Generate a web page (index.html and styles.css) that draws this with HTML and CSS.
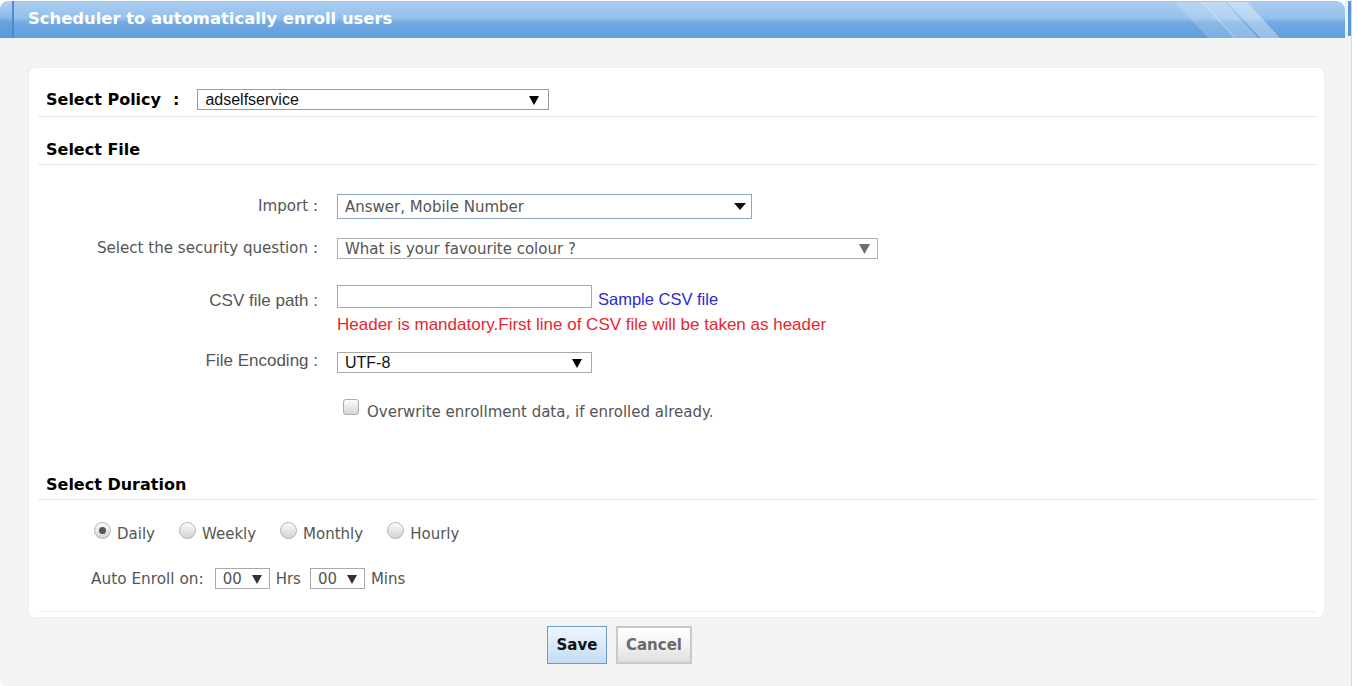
FILE: index.html
```html
<!DOCTYPE html>
<html>
<head>
<meta charset="utf-8">
<link rel="stylesheet" href="styles.css">
</head>
<body>
<div class="page">
  <div class="titlebar">
    <div class="tb-cap"></div>
    <div class="tb-main">
      <h1 class="tb-title">Scheduler to automatically enroll users</h1>
      <svg class="tb-stripes" width="110" height="37" viewBox="0 0 110 37">
        <polygon points="0,0 28,0 62,37 34,37" fill="#ffffff" fill-opacity="0.18"/>
        <polygon points="26,0 50,0 84,37 60,37" fill="#ffffff" fill-opacity="0.28"/>
        <polygon points="52,0 72,0 106,37 86,37" fill="#ffffff" fill-opacity="0.35"/>
      </svg>
    </div>
    <div class="tb-gap"></div>
    <div class="tb-end"></div>
  </div>

  <div class="content">
    <div class="card">
      <div class="policy-row">
        <span class="heading">Select Policy</span><span class="heading colon">:</span>
        <div class="sel sel-policy"><span>adselfservice</span>
          <svg width="10" height="10" viewBox="0 0 10 10"><path d="M0 1H10L5 10Z" fill="#000"/></svg>
        </div>
      </div>

      <div class="section-title">Select File</div>

      <div class="form">
        <div class="frow r-import">
          <div class="flabel lh25">Import :</div>
          <div class="sel sel-import"><span>Answer, Mobile Number</span>
            <svg width="12" height="7" viewBox="0 0 12 7"><path d="M0 0H12L6 7Z" fill="#111"/></svg>
          </div>
        </div>
        <div class="frow r-question">
          <div class="flabel lh21">Select the security question :</div>
          <div class="sel sel-question"><span>What is your favourite colour ?</span>
            <svg width="11" height="10" viewBox="0 0 11 10"><path d="M0 0H11L5.5 10Z" fill="#6d6d6d"/></svg>
          </div>
        </div>
        <div class="frow r-csv">
          <div class="flabel arial csv-label">CSV file path :</div>
          <div class="fcol">
            <div class="csv-line">
              <div class="textbox"></div>
              <span class="link">Sample CSV file</span>
            </div>
            <div class="err">Header is mandatory.First line of CSV file will be taken as header</div>
          </div>
        </div>
        <div class="frow r-enc">
          <div class="flabel arial enc-label">File Encoding :</div>
          <div class="sel sel-enc"><span>UTF-8</span>
            <svg width="10" height="10" viewBox="0 0 10 10"><path d="M0 1H10L5 10Z" fill="#000"/></svg>
          </div>
        </div>
        <div class="frow r-check">
          <div class="flabel"></div>
          <div class="checkline">
            <span class="checkbox"></span>
            <span class="check-text">Overwrite enrollment data, if enrolled already.</span>
          </div>
        </div>
      </div>

      <div class="section-title duration-title">Select Duration</div>

      <div class="duration">
        <div class="radios">
          <span class="radio on"></span><span class="rlabel">Daily</span>
          <span class="radio"></span><span class="rlabel">Weekly</span>
          <span class="radio"></span><span class="rlabel">Monthly</span>
          <span class="radio"></span><span class="rlabel">Hourly</span>
        </div>
        <div class="enroll">
          <span class="elabel">Auto Enroll on:</span>
          <div class="sel sel-time"><span>00</span>
            <svg width="10" height="10" viewBox="0 0 10 10"><path d="M0 1H10L5 10Z" fill="#333"/></svg>
          </div>
          <span class="unit">Hrs</span>
          <div class="sel sel-time"><span>00</span>
            <svg width="10" height="10" viewBox="0 0 10 10"><path d="M0 1H10L5 10Z" fill="#333"/></svg>
          </div>
          <span class="unit">Mins</span>
        </div>
      </div>
    </div>

    <div class="buttons">
      <button class="btn btn-save">Save</button>
      <button class="btn btn-cancel">Cancel</button>
    </div>
  </div>
</div>
</body>
</html>
```

FILE: styles.css
```css
html, body {
  margin: 0;
  padding: 0;
  background: #ffffff;
}
body {
  font-family: "DejaVu Sans", Verdana, sans-serif;
  font-size: 15px;
  color: #555555;
}
.page {
  width: 1352px;
  height: 686px;
  box-sizing: border-box;
  background: #f3f3f3;
  border-right: 1px solid #dadada;
  border-bottom-left-radius: 6px;
  overflow: hidden;
}

/* title bar */
.titlebar {
  display: flex;
  height: 37px;
  padding-top: 1px;
  background: #ffffff;
}
.tb-cap {
  width: 12px;
  border-top-left-radius: 8px;
  background: linear-gradient(to bottom, #b4d3f2 0%, #8ab8e8 45%, #6aa2de 55%, #5b98d8 100%);
  border-right: 2px solid #4c8bd0;
}
.tb-main {
  flex: 1;
  position: relative;
  display: flex;
  align-items: center;
  padding-left: 14px;
  border-top-right-radius: 9px;
  border-top: 1px solid #9cc4ee;
  background: linear-gradient(to bottom, #a9cdf1 0%, #94c0ec 45%, #73aae3 56%, #5e9ddc 100%);
}
.tb-title {
  margin: 0 0 3px 0;
  font-family: "DejaVu Sans", Verdana, sans-serif;
  font-weight: bold;
  font-size: 16.4px;
  color: #ffffff;
}
.tb-stripes {
  position: absolute;
  right: 60px;
  top: 0;
}
.tb-gap {
  width: 3px;
  background: #e8f0f8;
}
.tb-end {
  width: 3px;
  margin: 0 0 2px 0;
  background: #5a96d6;
}

/* content */
.content {
  padding: 30px 0 0 29px;
}
.card {
  width: 1295px;
  box-sizing: border-box;
  background: #ffffff;
  border-radius: 6px;
  box-shadow: 0 0 2px rgba(0, 0, 0, 0.07);
  padding-bottom: 5px;
}
.heading {
  font-weight: bold;
  font-size: 16px;
  color: #000000;
}
.colon {
  margin-left: 12px;
}
.policy-row {
  display: flex;
  align-items: center;
  margin: 0 7px 0 9px;
  padding: 21px 0 6px 8px;
  border-bottom: 1px solid #e7e7e7;
}
.section-title {
  margin: 0 7px 0 9px;
  padding: 24px 0 5px 8px;
  line-height: 18px;
  font-weight: bold;
  font-size: 16px;
  color: #000000;
  border-bottom: 1px solid #e7e7e7;
}

/* select look */
.sel {
  display: flex;
  align-items: center;
  justify-content: space-between;
  box-sizing: border-box;
  background: #ffffff;
  border: 1px solid #a9a9a9;
  padding: 0 9px 0 7px;
  white-space: nowrap;
}
.sel-policy {
  margin-left: 18px;
  width: 352px;
  height: 21px;
  font-family: "Liberation Sans", Arial, sans-serif;
  font-size: 16px;
  color: #111111;
  border-color: #9b9b9b;
}
.form {
  padding-top: 29px;
}
.frow {
  display: flex;
  align-items: flex-start;
}
.flabel {
  width: 289px;
  padding-right: 19px;
  box-sizing: content-box;
  text-align: right;
  white-space: nowrap;
  font-size: 15.1px;
}
.arial {
  font-family: "Liberation Sans", Arial, sans-serif;
  font-size: 17px;
}
.lh25 { line-height: 25px; }
.lh21 { line-height: 21px; }
.sel-import {
  width: 415px;
  height: 25px;
  border-color: #8ea6bd;
  padding-right: 5px;
}
.r-question { margin-top: 19px; }
.sel-question {
  width: 541px;
  height: 21px;
  border-color: #b1b1b1;
  padding-right: 7px;
}
.r-csv { margin-top: 26px; }
.csv-label {
  line-height: 22px;
  padding-top: 5px;
}
.csv-line {
  display: flex;
  align-items: center;
  height: 23px;
}
.textbox {
  width: 255px;
  height: 23px;
  box-sizing: border-box;
  border: 1px solid #a0a8b0;
  background: #ffffff;
}
.link {
  margin-left: 6px;
  margin-top: 4px;
  line-height: 18px;
  font-family: "Liberation Sans", Arial, sans-serif;
  font-size: 16.5px;
  color: #2a2ad0;
}
.err {
  margin-top: 8px;
  line-height: 18px;
  font-family: "Liberation Sans", Arial, sans-serif;
  font-size: 17px;
  color: #e8262c;
  white-space: nowrap;
}
.r-enc { margin-top: 18px; }
.enc-label {
  line-height: 17px;
}
.sel-enc {
  width: 255px;
  height: 21px;
  font-family: "Liberation Sans", Arial, sans-serif;
  font-size: 16px;
  color: #111111;
  padding-right: 9px;
}
.r-check { margin-top: 26px; }
.checkline {
  display: flex;
  align-items: flex-start;
  padding-left: 6px;
}
.checkbox {
  width: 16px;
  height: 16px;
  box-sizing: border-box;
  border: 1px solid #acacac;
  border-radius: 3px;
  background: linear-gradient(to bottom, #fdfdfd 0%, #e3e3e3 60%, #d6d6d6 100%);
}
.check-text {
  margin-left: 8px;
  margin-top: 3px;
  line-height: 20px;
  font-size: 15px;
}

.duration-title {
  margin-top: 30px;
}
.duration {
  margin: 0 7px 0 9px;
  padding: 22px 0 22px 56px;
  border-bottom: 1px solid #f0f0f0;
}
.radios {
  display: flex;
  align-items: flex-start;
}
.radio {
  width: 17px;
  height: 17px;
  box-sizing: border-box;
  border-radius: 50%;
  border: 1px solid #b3b3b3;
  background: linear-gradient(to bottom, #fbfbfb 0%, #e2e2e2 60%, #d4d4d4 100%);
  display: flex;
  align-items: center;
  justify-content: center;
}
.radio.on::after {
  content: "";
  width: 7px;
  height: 7px;
  border-radius: 50%;
  background: #555555;
}
.rlabel {
  margin: 2px 24px 0 6px;
  line-height: 20px;
}
.enroll {
  display: flex;
  align-items: center;
  margin-top: 24px;
  margin-left: -3px;
}
.elabel {
  margin-right: 11px;
  font-size: 15.3px;
}
.sel-time {
  width: 55px;
  height: 21px;
  padding: 0 7px 0 7px;
  color: #555555;
}
.unit {
  margin: 0 9px 0 6px;
  font-size: 15px;
}

/* buttons */
.buttons {
  display: flex;
  gap: 9px;
  padding: 9px 0 0 518px;
}
.btn {
  height: 38px;
  font-family: "DejaVu Sans", Verdana, sans-serif;
  font-weight: bold;
  font-size: 15px;
  padding: 0;
  box-sizing: border-box;
}
.btn-save {
  width: 60px;
  color: #111111;
  border: 1px solid #6b9ccf;
  background: linear-gradient(to bottom, #eef6fe 0%, #d9e9f9 50%, #c4dcf4 100%);
}
.btn-cancel {
  width: 76px;
  color: #6a6a6a;
  border: 2px solid #c9c9c9;
  background: linear-gradient(to bottom, #ffffff 0%, #f3f3f3 50%, #dedede 100%);
}
```
